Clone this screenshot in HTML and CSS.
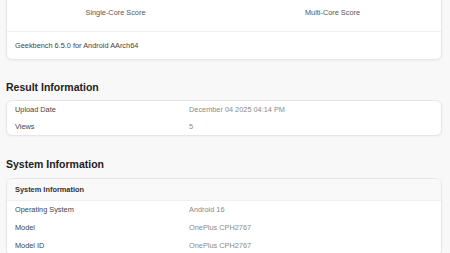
FILE: index.html
```html
<!DOCTYPE html>
<html>
<head>
<meta charset="utf-8">
<link rel="stylesheet" href="styles.css">
</head>
<body>
<div class="page">
  <div class="card score-card">
    <div class="scores">
      <div class="score">Single-Core Score</div>
      <div class="score">Multi-Core Score</div>
    </div>
    <div class="version">Geekbench 6.5.0 for Android AArch64</div>
  </div>

  <h2 class="section-title">Result Information</h2>
  <div class="card">
    <div class="row"><span class="label">Upload Date</span><span class="value">December 04 2025 04:14 PM</span></div>
    <div class="row"><span class="label">Views</span><span class="value">5</span></div>
  </div>

  <h2 class="section-title section-title-tall">System Information</h2>
  <div class="card">
    <div class="card-head">System Information</div>
    <div class="row row-tall"><span class="label">Operating System</span><span class="value">Android 16</span></div>
    <div class="row row-tall"><span class="label">Model</span><span class="value">OnePlus CPH2767</span></div>
    <div class="row row-tall"><span class="label">Model ID</span><span class="value">OnePlus CPH2767</span></div>
  </div>
</div>
</body>
</html>
```

FILE: styles.css
```css
html, body {
  margin: 0;
  padding: 0;
  background: #f8f8f8;
  font-family: "Liberation Sans", Arial, sans-serif;
  color: #333;
  -webkit-font-smoothing: antialiased;
}
.page {
  padding: 0 8px 0 6px;
}
.card {
  background: #fff;
  border: 1px solid #e6e6e6;
  border-radius: 6px;
  box-shadow: 0 1px 2px rgba(0,0,0,0.04);
  overflow: hidden;
}
.score-card {
  margin-top: -21px;
}
.scores {
  display: grid;
  grid-template-columns: 1fr 1fr;
  padding: 20px 0 5px;
  border-bottom: 1px solid #f0f0f0;
}
.score {
  text-align: center;
  font-size: 7.35px;
  color: #555;
  line-height: 26px;
}
.version {
  height: 27px;
  line-height: 27px;
  padding-left: 8px;
  font-size: 7.35px;
  color: #444;
}
.section-title {
  margin: 0;
  box-sizing: border-box;
  height: 40px;
  padding-top: 20px;
  line-height: 14px;
  font-size: 10.5px;
  font-weight: bold;
  color: #222;
}
.section-title-tall {
  height: 42px;
  padding-top: 21px;
}
.row {
  display: grid;
  grid-template-columns: 174px 1fr;
  height: 17px;
  line-height: 17px;
  font-size: 7.35px;
  padding-left: 8px;
}
.row-tall {
  height: 18px;
  line-height: 18px;
}
.label {
  color: #444;
}
.value {
  color: #8a8a8a;
}
.card-head {
  height: 21px;
  line-height: 21px;
  padding-left: 8px;
  font-size: 7.4px;
  font-weight: bold;
  color: #333;
  background: #f9f9f9;
  border-bottom: 1px solid #f0f0f0;
}
```
